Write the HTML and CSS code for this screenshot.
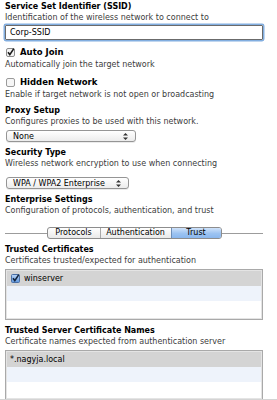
FILE: index.html
```html
<!DOCTYPE html>
<html lang="en">
<head>
  <meta charset="UTF-8">
  <meta name="viewport" content="width=device-width, initial-scale=1.0">
  <title>Wi-Fi Payload</title>
  <link rel="stylesheet" href="styles.css">
</head>
<body>
  <div class="pane">
    <div class="group">
      <h2 class="label">Service Set Identifier (SSID)</h2>
      <p class="desc">Identification of the wireless network to connect to</p>
      <div class="text-field">Corp-SSID</div>
    </div>

    <div class="group check-group">
      <label class="check-row">
        <svg class="box" width="9" height="9" viewBox="0 0 9 9">
          <rect x="0.5" y="0.5" width="8" height="8" rx="1.5" fill="#f4f4f4" stroke="#8c8c8c"/>
          <path d="M2 4.3 L3.8 6.6 L7.8 0.6" fill="none" stroke="#1a1a1a" stroke-width="1.6"/>
        </svg>
        <span>Auto Join</span>
      </label>
      <p class="desc">Automatically join the target network</p>
    </div>

    <div class="group check-group">
      <label class="check-row">
        <svg class="box" width="9" height="9" viewBox="0 0 9 9">
          <rect x="0.5" y="0.5" width="8" height="8" rx="1.5" fill="#f6f6f6" stroke="#9a9a9a"/>
        </svg>
        <span>Hidden Network</span>
      </label>
      <p class="desc">Enable if target network is not open or broadcasting</p>
    </div>

    <div class="group">
      <h2 class="label">Proxy Setup</h2>
      <p class="desc">Configures proxies to be used with this network.</p>
      <div class="popup popup-none">
        <span>None</span>
        <svg width="5" height="7" viewBox="0 0 5 7"><path d="M2.5 0 L5 2.6 H0 Z M2.5 7 L5 4.4 H0 Z" fill="#333"/></svg>
      </div>
    </div>

    <div class="group">
      <h2 class="label">Security Type</h2>
      <p class="desc">Wireless network encryption to use when connecting</p>
      <div class="popup popup-wpa">
        <span>WPA / WPA2 Enterprise</span>
        <svg width="5" height="7" viewBox="0 0 5 7"><path d="M2.5 0 L5 2.6 H0 Z M2.5 7 L5 4.4 H0 Z" fill="#333"/></svg>
      </div>
    </div>

    <div class="group">
      <h2 class="label">Enterprise Settings</h2>
      <p class="desc">Configuration of protocols, authentication, and trust</p>
      <div class="tabs">
        <div class="tab-line"></div>
        <div class="segments">
          <span class="seg">Protocols</span>
          <span class="seg">Authentication</span>
          <span class="seg active">Trust</span>
        </div>
        <div class="tab-line"></div>
      </div>
    </div>

    <div class="group">
      <h2 class="label">Trusted Certificates</h2>
      <p class="desc">Certificates trusted/expected for authentication</p>
      <div class="list list-certs">
        <div class="row selected">
          <svg class="box" width="9" height="9" viewBox="0 0 9 9">
            <defs>
              <linearGradient id="blue" x1="0" y1="0" x2="0" y2="1">
                <stop offset="0" stop-color="#bcd6f7"/>
                <stop offset="1" stop-color="#5d95dc"/>
              </linearGradient>
            </defs>
            <rect x="0.5" y="0.5" width="8" height="8" rx="1" fill="url(#blue)" stroke="#4a6fa5"/>
            <path d="M2 4.3 L3.8 6.6 L7.8 0.6" fill="none" stroke="#14243c" stroke-width="1.6"/>
          </svg>
          <span>winserver</span>
        </div>
        <div class="row alt"></div>
        <div class="row"></div>
      </div>
    </div>

    <div class="group">
      <h2 class="label">Trusted Server Certificate Names</h2>
      <p class="desc">Certificate names expected from authentication server</p>
      <div class="list list-names">
        <div class="row selected"><span>*.nagyja.local</span></div>
        <div class="row alt"></div>
        <div class="row"></div>
      </div>
    </div>
  </div>
</body>
</html>
```

FILE: styles.css
```css
* {
  margin: 0;
  padding: 0;
  box-sizing: border-box;
}

body {
  background: #fff;
  color: #000;
  font-family: "Lucida Grande", "DejaVu Sans", sans-serif;
  font-size: 8px;
  line-height: 11px;
  height: 400px;
  overflow: hidden;
  border-bottom: 1px solid #d4d4d4;
}

.pane {
  padding: 1px 14px 0 5px;
}

.label {
  font-size: 8px;
  font-weight: bold;
  line-height: 11px;
}

.desc {
  color: #3c3c3c;
  line-height: 11px;
}

.group {
  margin-bottom: 5px;
}

/* Text field with focus ring */
.text-field {
  margin-top: 2px;
  height: 15px;
  padding: 1px 4px 0;
  border: 1px solid #6b6b6b;
  box-shadow: 0 0 0 1.5px #82aee0;
  border-radius: 1px;
  line-height: 12px;
}

/* Checkboxes */
.check-group {
  margin-top: 7px;
}

.check-row {
  display: flex;
  align-items: center;
  gap: 5px;
  padding-left: 1px;
  font-weight: bold;
  font-size: 8.5px;
}

.check-row + .desc {
  margin-top: 1px;
}

/* Popup buttons */
.popup {
  margin-top: 3px;
  height: 12px;
  display: flex;
  align-items: center;
  justify-content: space-between;
  padding: 0 7px 0 6px;
  border: 1px solid #959595;
  border-radius: 3px;
  background: linear-gradient(#ffffff, #ececec);
  box-shadow: 0 1px 0 rgba(0, 0, 0, 0.08);
}

.popup-none {
  width: 130px;
  margin-left: 1px;
}

.popup-wpa {
  width: 123px;
  margin-left: 1px;
  margin-top: 8px;
}

/* Segmented tabs */
.tabs {
  margin-top: 11px;
  display: flex;
  align-items: center;
}

.tab-line {
  flex: 1;
  height: 1px;
  background: #9c9c9c;
}

.segments {
  display: flex;
  height: 12px;
  border: 1px solid #8d8d8d;
  border-radius: 3px;
  background: linear-gradient(#ffffff, #e9e9e9);
  overflow: hidden;
}

.seg {
  display: flex;
  align-items: center;
  justify-content: center;
  border-left: 1px solid #a8a8a8;
  line-height: 10px;
}

.seg:first-child {
  border-left: none;
  width: 52px;
}

.seg:nth-child(2) {
  width: 71px;
}

.seg.active {
  width: 50px;
  background: linear-gradient(#cfe2fa, #9cc3f1 55%, #8ab7ee);
  border-left-color: #6d8fba;
}

/* Lists */
.list {
  margin-top: 3px;
  border: 1px solid #a9a9a9;
  box-shadow: inset 0 0 0 1px #e4e4e4;
  padding: 1px;
}

.row {
  height: 15px;
  display: flex;
  align-items: center;
  gap: 4px;
  padding-left: 4px;
}

.row.selected {
  background: #d4d4d4;
}

.row.alt {
  background: #eef3fb;
}

.list-certs {
  height: 51px;
}

.list-names {
  height: 50px;
}

.list-names .row {
  padding-left: 3px;
}
```
